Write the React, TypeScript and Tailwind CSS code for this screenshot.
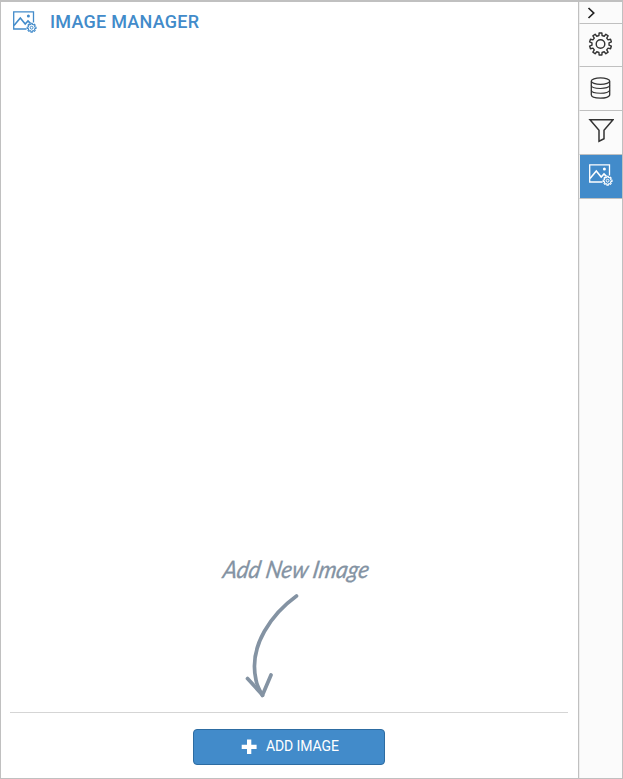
import React from "react";

function gearPath(cx: number, cy: number, outer: number, inner: number, teeth: number) {
  const points: string[] = [];
  const step = (Math.PI * 2) / teeth;
  for (let i = 0; i < teeth; i++) {
    const mid = i * step - Math.PI / 2;
    const corners: [number, number][] = [
      [inner, -0.29],
      [outer, -0.2],
      [outer, 0.2],
      [inner, 0.29],
    ];
    for (const [r, o] of corners) {
      const a = mid + o * step;
      points.push(`${(cx + r * Math.cos(a)).toFixed(2)} ${(cy + r * Math.sin(a)).toFixed(2)}`);
    }
  }
  return `M${points.join("L")}Z`;
}

function ImageGearIcon() {
  return (
    <svg width="24" height="22" viewBox="0 0 24 22" fill="none" stroke="currentColor" className="block shrink-0">
      <path d="M13.5 18H.7V.9H20.5V11.5" strokeWidth="1.3" />
      <path d="M1 14.6L7.3 7L12.2 13.1L15 9.9L17.4 12.4" strokeWidth="1.6" />
      <circle cx="15.4" cy="4.9" r="1.5" fill="currentColor" stroke="none" />
      <path d={gearPath(18.6, 16.7, 4.5, 3.4, 8)} strokeWidth="1.1" strokeLinejoin="round" />
      <circle cx="18.6" cy="16.7" r="1.4" strokeWidth="1" />
    </svg>
  );
}

function SettingsIcon() {
  return (
    <svg width="24" height="24" viewBox="0 0 24 24" fill="none" stroke="#333" strokeWidth="1.4" strokeLinejoin="round">
      <path d={gearPath(12.5, 12, 11.1, 8.6, 10)} />
      <circle cx="12.5" cy="12" r="4.3" />
    </svg>
  );
}

function DatabaseIcon() {
  return (
    <svg width="20" height="22" viewBox="-.5 0 20 22" fill="none" stroke="#333" strokeWidth="1.3" className="overflow-visible">
      <ellipse cx="10" cy="4.1" rx="9.2" ry="3.3" />
      <path d="M.8 4.2V17.8C.8 22.3 19.2 22.3 19.2 17.8V4.2" />
      <path d="M.8 8.2C.8 12.5 19.2 12.5 19.2 8.2M.8 13C.8 17.4 19.2 17.4 19.2 13" strokeWidth="1.1" />
    </svg>
  );
}

function FilterIcon() {
  return (
    <svg width="26" height="25" viewBox="0 0 26 25" fill="none" stroke="#333" strokeWidth="1.5">
      <path d="M2 1.7H25L16 12.2V20.8L11 23.2V12.2Z" />
    </svg>
  );
}

export default function App() {
  return (
    <div className="flex h-[779px] w-[623px] border border-t-2 border-[#c0c0c0] bg-white font-['Roboto',sans-serif]">
      <main className="flex min-w-0 flex-1 flex-col">
        <header className="flex h-10 items-start pl-3 pt-[9px] text-[#428bca]">
          <ImageGearIcon />
          <h1 className="ml-[13px] mt-px text-[18px] font-medium leading-5 tracking-[0.25px]">IMAGE MANAGER</h1>
        </header>
        <section className="flex flex-1 flex-col justify-end text-[#8493a3]">
          <div className="ml-[220px] h-[38px] w-[150px]">
            <svg width="150" height="38" viewBox="0 0 150 38" className="overflow-visible">
              <text
                x="1"
                y="23"
                textLength="146"
                lengthAdjust="spacingAndGlyphs"
                transform="translate(4 0) skewX(-10)"
                fill="#8493a3"
                stroke="#8493a3"
                strokeWidth=".3"
                className="font-['Lato',sans-serif] text-[24px] italic"
              >
                Add New Image
              </text>
            </svg>
          </div>
          <svg width="30" height="106" viewBox="0 0 30 106" fill="none" stroke="currentColor" strokeLinecap="round" strokeLinejoin="round" className="mb-[13px] ml-[244px] overflow-visible">
            <path d="M51.5 3C28 20 3 52 11 87C12 93 15 98 17.5 102.5" strokeWidth="3.7" />
            <path d="M2.5 85.5L17.5 102L26 82" strokeWidth="3.7" />
          </svg>
        </section>
        <footer className="ml-[9px] mr-[10px] flex h-[66px] shrink-0 justify-center border-t border-[#d5d5d5] pt-4">
          <button className="flex h-9 w-48 items-center rounded border border-[#2d6ca2] bg-[#428bca] pb-px pl-[47px] text-[14px] tracking-[-0.1px] text-white">
            <svg width="16" height="16" viewBox="0 0 16 16" fill="currentColor" className="mr-[9px]">
              <path d="M6 .5H10.3V5.8H15.6V10H10.3V15H6V10H.7V5.8H6Z" />
            </svg>
            ADD IMAGE
          </button>
        </footer>
      </main>
      <aside className="flex w-11 shrink-0 flex-col border-l border-[#c0c0c0] bg-[#fbfbfb]">
        <div className="h-[22px] border-b border-l border-b-[#c0c0c0] border-l-[#eeeeee] pl-[7px] pt-[5px]">
          <svg width="9" height="12" viewBox="0 0 9 12" fill="none" stroke="#222" strokeWidth="1.7">
            <path d="M1.5 1L6.7 6L1.5 11" />
          </svg>
        </div>
        <div className="flex h-[43px] justify-center border-b border-l border-b-[#c0c0c0] border-l-[#eeeeee] pr-[2px] pt-2">
          <SettingsIcon />
        </div>
        <div className="flex h-11 justify-center border-b border-l border-b-[#c0c0c0] border-l-[#eeeeee] pr-[2px] pt-[10px]">
          <DatabaseIcon />
        </div>
        <div className="flex h-11 justify-center border-b border-l border-b-[#c0c0c0] border-l-[#eeeeee] pt-[7px]">
          <FilterIcon />
        </div>
        <div className="flex h-11 justify-center border-b border-l border-b-[#c0c0c0] border-l-[#eeeeee] bg-[#428bca] pt-[9px] text-white">
          <ImageGearIcon />
        </div>
        <div className="flex-1 border-l border-[#eeeeee]" />
      </aside>
    </div>
  );
}
